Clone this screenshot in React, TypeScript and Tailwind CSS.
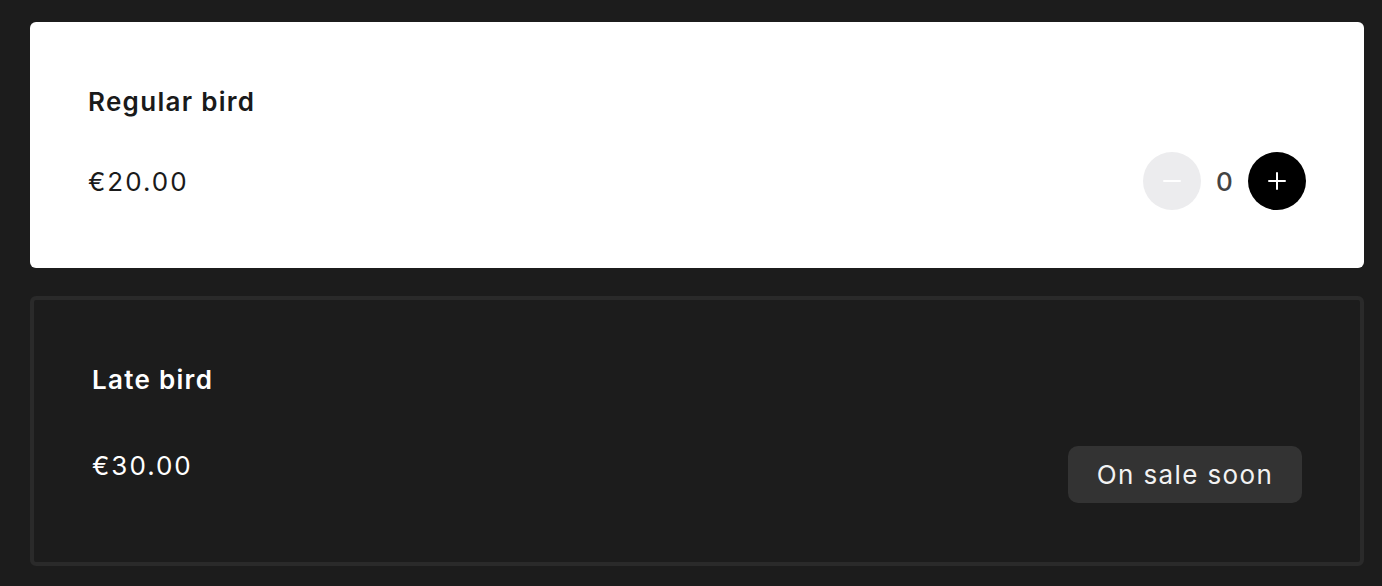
import React from "react";

export default function App() {
  return (
    <div className="min-h-[586px] w-full bg-[#1c1c1c] pl-[30px] pr-[18px] pt-[22px]" style={{ fontFamily: "Inter, 'Noto Sans', sans-serif" }}>
      <div className="flex flex-col gap-[28px]">
        <div className="rounded-[6px] bg-white px-[58px] pb-[58px] pt-[60px]">
          <div className="text-[26px] font-semibold leading-[39px] tracking-[1.3px] text-[#1a1a1a]">Regular bird</div>
          <div className="mt-[31px] flex h-[58px] items-center justify-between">
            <div className="text-[26px] leading-[39px] tracking-[2px] text-[#1a1a1a]">€20.00</div>
            <div className="flex items-center">
              <button className="flex h-[58px] w-[58px] items-center justify-center rounded-full bg-[#ececee]">
                <svg width="20" height="20" viewBox="0 0 20 20"><path d="M2 10h16" stroke="white" strokeWidth="2" strokeLinecap="round" /></svg>
              </button>
              <span className="w-[47px] text-center text-[26px] font-medium leading-[39px] text-[#444]">0</span>
              <button className="flex h-[58px] w-[58px] items-center justify-center rounded-full bg-black">
                <svg width="20" height="20" viewBox="0 0 20 20"><path d="M2 10h16M10 2v16" stroke="white" strokeWidth="2" strokeLinecap="round" /></svg>
              </button>
            </div>
          </div>
        </div>
        <div className="rounded-[6px] border-[4px] border-[#2a2a2a] bg-[#1c1c1c] px-[58px] pb-[59px] pt-[60px]">
          <div className="text-[26px] font-semibold leading-[39px] tracking-[1.3px] text-white">Late bird</div>
          <div className="mt-[47px] flex items-start justify-between">
            <div className="text-[26px] leading-[39px] tracking-[2px] text-white">€30.00</div>
            <div className="flex h-[57px] w-[234px] items-center justify-center rounded-[10px] bg-[#333333] text-[26px] tracking-[1.4px] text-[#f2f2f2]">On sale soon</div>
          </div>
        </div>
      </div>
    </div>
  );
}
